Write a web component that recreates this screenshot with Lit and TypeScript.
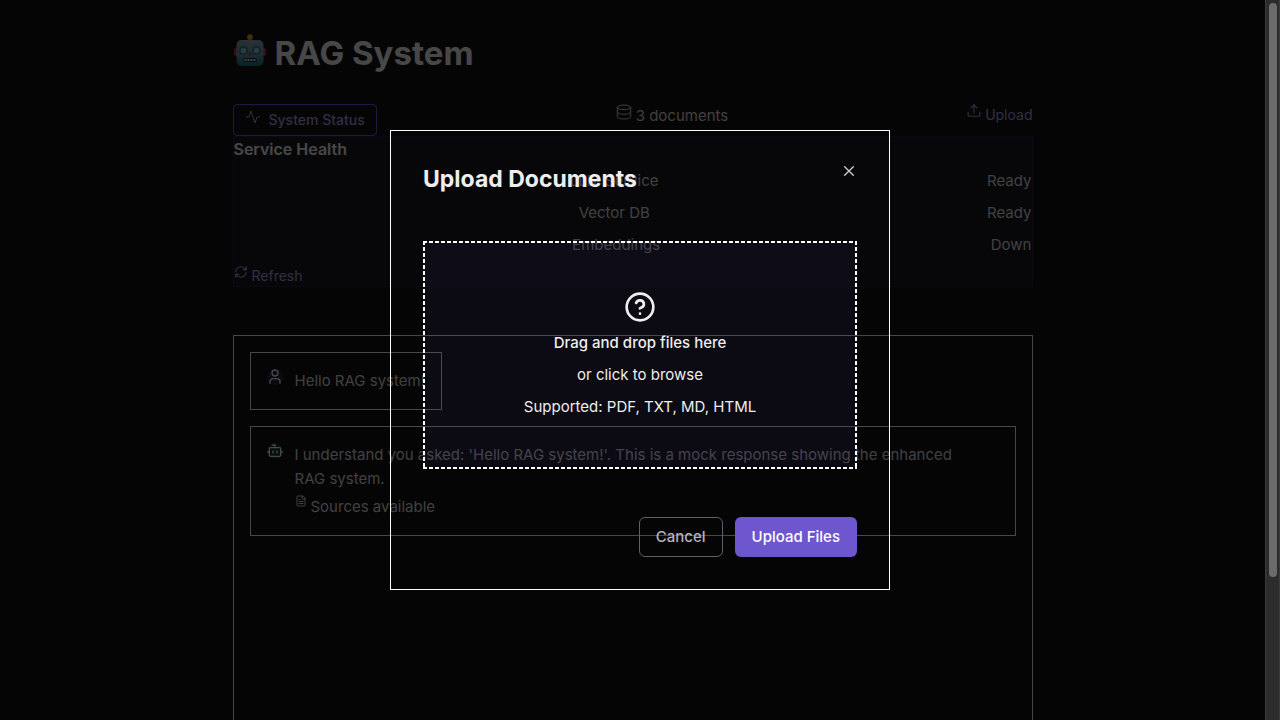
import { LitElement, html, css, svg } from "lit";
import { customElement } from "lit/decorators.js";

const icon = (size: number, body: unknown, width = 2) => html`<svg
  class="icon"
  width=${size}
  height=${size}
  viewBox="0 0 24 24"
  fill="none"
  stroke="currentColor"
  stroke-width=${width}
  stroke-linecap="round"
  stroke-linejoin="round"
  aria-hidden="true"
>${body}</svg>`;

const activity = svg`<path d="M22 12h-4l-3 9L9 3l-3 9H2"/>`;
const database = svg`<ellipse cx="12" cy="5" rx="10" ry="3.500"/><path d="M2 5v14c0 2 4.500 3.500 10 3.500s10-1.500 10-3.500V5"/><path d="M2 12c0 2 4.500 3.500 10 3.500s10-1.500 10-3.500"/>`;
const upload = svg`<path d="M2 14v5a2 2 0 0 0 2 2h16a2 2 0 0 0 2-2v-5"/><path d="m17 6.500-5-5-5 5"/><path d="M12 1.500V15"/>`;
const refresh = svg`<path d="M3 12a9 9 0 0 1 9-9 9.750 9.750 0 0 1 6.740 2.740L21 8"/><path d="M21 3v5h-5"/><path d="M21 12a9 9 0 0 1-9 9 9.750 9.750 0 0 1-6.740-2.740L3 16"/><path d="M8 16H3v5"/>`;
const user = svg`<circle cx="12" cy="6" r="4.500"/><path d="M4.500 21.500V19a4.500 4.500 0 0 1 4.500-4.500h6a4.500 4.500 0 0 1 4.500 4.500v2.500"/>`;
const bot = svg`<path d="M12 7V3H8"/><rect width="17" height="13" x="3.500" y="7" rx="2"/><path d="M1 13.500h2M21 13.500h2M15 12v3M9 12v3"/>`;
const file = svg`<path d="M15 2H6a2 2 0 0 0-2 2v16a2 2 0 0 0 2 2h12a2 2 0 0 0 2-2V7Z"/><path d="M14 2v4a2 2 0 0 0 2 2h4M10 9H8M16 13H8M16 17H8"/>`;
const close = svg`<path d="M18.500 5.500l-13 13M5.500 5.500l13 13"/>`;
const help = svg`<circle cx="12" cy="12" r="10"/><path d="M9.090 9a3 3 0 0 1 5.830 1c0 2-3 3-3 3M12 17h.01"/>`;

const robot = html`<svg class="robot" width="34" height="34" viewBox="0 0 34 34" role="img" aria-label="Robot">
  <defs>
    <linearGradient id="face" x1="0" y1="0" x2="0" y2="1">
      <stop offset="0" stop-color="#8aa6ac" /><stop offset=".55" stop-color="#6a98a2" /><stop offset="1" stop-color="#176e80" />
    </linearGradient>
  </defs>
  <rect x="1" y="14" width="4" height="8" rx="2" fill="#c02f3a" />
  <rect x="29" y="14" width="4" height="8" rx="2" fill="#c02f3a" />
  <path d="M13 7q4-5 8 0z" fill="#6a4a98" />
  <circle cx="17" cy="3" r="2.800" fill="#e3a424" />
  <rect x="3.500" y="6" width="27" height="26" rx="5" fill="url(#face)" />
  <circle cx="10.500" cy="16.500" r="4.500" fill="#16809a" /><circle cx="23.500" cy="16.500" r="4.500" fill="#16809a" />
  <circle cx="10.500" cy="16.500" r="2.700" fill="#a8c4c6" /><circle cx="23.500" cy="16.500" r="2.700" fill="#a8c4c6" />
  <path d="m17 17 2.500 4.500h-5z" fill="#bd4545" />
  <rect x="10" y="24" width="14" height="4" rx="2" fill="#123640" />
  <path d="M11.500 26h11" stroke="#dde" stroke-width="2" stroke-dasharray="2 1" />
</svg>`;

const services = [
  { name: "LLM Service", state: "Ready" },
  { name: "Vector DB", state: "Ready" },
  { name: "Embeddings", state: "Down" },
];

@customElement("app-root")
export class AppRoot extends LitElement {
  static styles = css`
    :host {
      display: block;
      position: relative;
      height: 100vh;
      overflow: hidden;
      background: #111;
      color: #eee;
      font: 15px/24px Inter, "Liberation Sans", sans-serif;
    }
    * { box-sizing: border-box; }
    h1, h2, h3, p { margin: 0; }
    button { font: inherit; color: inherit; background: none; border: 0; padding: 0; cursor: pointer; }
    .icon { display: block; flex: none; }
    .page { height: 100%; padding: 32px 16px 0; margin-right: 15px; display: flex; flex-direction: column; align-items: center; }
    .container { width: 100%; max-width: 800px; flex: 1; display: flex; flex-direction: column; }
    .heading { display: flex; gap: 8px; align-items: flex-start; height: 72px; font-size: 33px; line-height: 42px; font-weight: 700; }
    .robot { display: block; flex: none; margin-top: 2px; }
    .toolbar { display: flex; justify-content: space-between; align-items: flex-start; }
    .status { display: flex; gap: 8px; height: 32px; padding: 5px 11px; font-size: 14px; line-height: 20px; font-weight: 500; border: 1px solid #6e56cf; border-radius: 4px; color: #a99adf; }
    .status .icon { margin-top: -1px; }
    .count { display: flex; gap: 4px; color: #d6d6d6; }
    .link { display: flex; gap: 4px; color: #a99adf; font-size: 14px; line-height: 22px; }
    .health { border: 1px solid #251f4b; background: #18181e; display: flex; flex-direction: column; height: 151px; }
    .health h3 { font-size: 16px; line-height: 24px; font-weight: 600; margin-bottom: 8px; }
    .row { display: flex; justify-content: space-between; margin-bottom: 8px; color: #d8d8d8; }
    .dot { width: 8px; }
    .chat { flex: 1; margin-top: 48px; border: 1px solid #eee; border-bottom: 0; padding: 16px; display: flex; flex-direction: column; align-items: flex-start; gap: 16px; }
    .message { border: 1px solid #eee; padding: 16px; display: flex; gap: 12px; color: #d8d8d8; }
    .avatar { width: 16px; height: 16px; border-radius: 50%; flex: none; display: grid; place-items: center; background: #282042; color: #eee; }
    .avatar.green { background: #133527; }
    .wide { align-self: stretch; padding-right: 32px; }
    .sources { display: flex; gap: 4px; padding-top: 4px; }
    .overlay { position: absolute; inset: 0; background: rgba(0, 0, 0, 0.7); display: grid; place-items: center; }
    .modal { width: 500px; max-width: 100%; border: 1px solid #fff; padding: 32px; display: flex; flex-direction: column; }
    .top { display: flex; justify-content: space-between; align-items: flex-start; height: 78px; }
    .top h2 { font-size: 23px; line-height: 32px; font-weight: 700; }
    .close { color: #ccc; }
    .drop {
      --across: repeating-linear-gradient(90deg, #fff 0 4px, transparent 4px 6px);
      --down: repeating-linear-gradient(#fff 0 4px, transparent 4px 6px);
      background:
        var(--across) top / 100% 2px no-repeat,
        var(--across) bottom / 100% 2px no-repeat,
        var(--down) left / 2px 100% no-repeat,
        var(--down) right / 2px 100% no-repeat,
        rgba(110, 86, 207, 0.07);
      padding: 50px; display: flex; flex-direction: column; align-items: center; gap: 8px; text-align: center;
    }
    .drop .lead { font-weight: 500; }
    .drop p { white-space: nowrap; }
    .actions { margin-top: 48px; display: flex; justify-content: flex-end; gap: 12px; }
    .btn { height: 40px; padding: 0 17px; border-radius: 6px; font-weight: 500; }
    .cancel { border: 1px solid #606068; color: #b5b3bd; padding: 0 16px; }
    .primary { background: #6e56cf; color: #fff; }
    .track { position: absolute; top: 0; right: 0; bottom: 0; width: 15px; background: #2c2c2c; border-left: 1px solid #3d3d3d; border-right: 1px solid #3d3d3d; padding: 3px 2px 0 3px; }
    .thumb { width: 8px; height: 80%; border-radius: 4px; background: #6b6b6b; }
  `;

  render() {
    return html`
      <main class="page">
        <div class="container">
          <h1 class="heading">${robot}<span>RAG System</span></h1>
          <div class="toolbar">
            <button class="status">${icon(16, activity, 1.5)}<span>System Status</span></button>
            <div class="count">${icon(16, database, 1.5)}<span>3 documents</span></div>
            <button class="link">${icon(14, upload)}<span>Upload</span></button>
          </div>
          <section class="health">
            <h3>Service Health</h3>
            ${services.map((s) => html`<div class="row"><span class="dot"></span><span>${s.name}</span><span>${s.state}</span></div>`)}
            <button class="link">${icon(14, refresh)}<span>Refresh</span></button>
          </section>
          <section class="chat">
            <div class="message">
              <span class="avatar">${icon(16, user)}</span>
              <p>Hello RAG system!</p>
            </div>
            <div class="message wide">
              <span class="avatar green">${icon(16, bot)}</span>
              <div>
                <p>I understand you asked: 'Hello RAG system!'. This is a mock response showing the enhanced RAG system.</p>
                <div class="sources">${icon(12, file)}<span>Sources available</span></div>
              </div>
            </div>
          </section>
        </div>
      </main>
      <div class="overlay">
        <div class="modal" role="dialog" aria-modal="true" aria-labelledby="title">
          <div class="top">
            <h2 id="title">Upload Documents</h2>
            <button class="close" aria-label="Close">${icon(16, close)}</button>
          </div>
          <div class="drop">
            ${icon(32, help)}
            <p class="lead">Drag and drop files here</p>
            <p>or click to browse</p>
            <p>Supported: PDF, TXT, MD, HTML</p>
          </div>
          <div class="actions">
            <button class="btn cancel">Cancel</button>
            <button class="btn primary">Upload Files</button>
          </div>
        </div>
      </div>
      <div class="track" aria-hidden="true"><div class="thumb"></div></div>
    `;
  }
}
